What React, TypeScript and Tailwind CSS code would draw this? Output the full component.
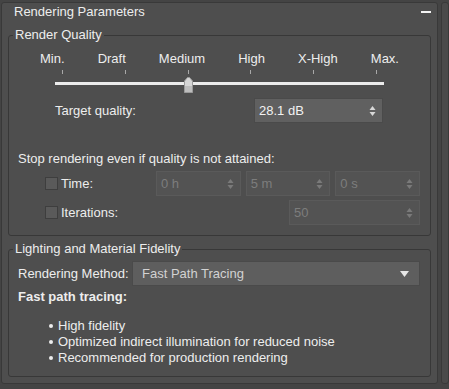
import React from "react";

const labels = ["Min.", "Draft", "Medium", "High", "X-High", "Max."];

function Arrows({ color }: { color: string }) {
  return (
    <svg width="7" height="12" viewBox="0 0 7 12">
      <path d="M0.5 5 L3.5 1 L6.5 5 Z" fill={color} />
      <path d="M0.5 7 L3.5 11 L6.5 7 Z" fill={color} />
    </svg>
  );
}

function Spin({
  value,
  disabled,
  className = "",
}: {
  value: string;
  disabled?: boolean;
  className?: string;
}) {
  return (
    <div
      className={`flex h-[25px] items-center justify-between border pl-[4px] pr-[6px] ${
        disabled
          ? "border-[#5a5a5a] bg-[#535353] text-[#7d7d7d]"
          : "border-[#4a4a4a] bg-[#606060] text-[#f2f2f2]"
      } ${className}`}
    >
      <span>{value}</span>
      <Arrows color={disabled ? "#7a7a7a" : "#d8d8d8"} />
    </div>
  );
}

function Check() {
  return (
    <span className="ml-[27px] block h-[13px] w-[13px] shrink-0 border border-[#3e3e3e] bg-[#5a5a5a]" />
  );
}

export default function App() {
  return (
    <div className="flex h-[389px] w-[449px] gap-[3px] overflow-hidden bg-[#444444] pl-[1px] pt-[2px] font-['Liberation_Sans',Arial,sans-serif] text-[13px] leading-[16px] text-[#ededed]">
      <div className="flex h-[382px] w-[437px] flex-col rounded-[3px] border border-[#393939] bg-[#4e4e4e]">
        {/* rollout header */}
        <div className="flex h-[18px] items-center justify-between pl-[12px] pr-[6px]">
          <span>Rendering Parameters</span>
          <span className="h-[2px] w-[10px] bg-[#f4f4f4]" />
        </div>

        {/* Render Quality */}
        <fieldset className="mx-[6px] mt-[6px] rounded-[3px] border border-[#383838]">
          <legend className="ml-[4px] px-[2px]">Render Quality</legend>

          <div className="px-[9px] pb-[10px]">
            <div className="mx-[22px] mt-[8px] flex justify-between">
              {labels.map((l) => (
                <span key={l}>{l}</span>
              ))}
            </div>

            <div className="relative mx-[37px] mt-[3px] h-[26px]">
              <div className="mx-[7px] flex justify-between">
                {labels.map((l) => (
                  <span key={l} className="block h-[4px] w-[1px] bg-[#a8a8a8]" />
                ))}
              </div>
              <div className="mt-[8px] h-[3px] w-full bg-[#ececec]" />
              <svg
                className="absolute left-[129px] top-[7px]"
                width="9"
                height="16"
                viewBox="0 0 9 16"
              >
                <path
                  d="M0.5 4 L3.5 0.5 L5.5 0.5 L8.5 4 L8.5 15.5 L0.5 15.5 Z"
                  fill="#d6d6d6"
                  stroke="#9a9a9a"
                  strokeWidth="1"
                />
                <path d="M1 9 L8 9 L8 15 L1 15 Z" fill="#bdbdbd" />
              </svg>
            </div>

            <div className="ml-[37px] mr-[38px] mt-[2px] flex items-center justify-between">
              <span>Target quality:</span>
              <Spin value="28.1 dB" className="w-[129px]" />
            </div>

            <div className="mt-[28px]">Stop rendering even if quality is not attained:</div>

            <div className="mt-[4px] flex items-center pr-[1px]">
              <Check />
              <span className="ml-[3px] w-[95px]">Time:</span>
              <div className="flex flex-1 gap-[5px]">
                <Spin value="0 h" disabled className="flex-1" />
                <Spin value="5 m" disabled className="flex-1" />
                <Spin value="0 s" disabled className="flex-1" />
              </div>
            </div>

            <div className="mt-[4px] flex items-center pr-[1px]">
              <Check />
              <span className="ml-[3px]">Iterations:</span>
              <Spin value="50" disabled className="ml-auto w-[131px]" />
            </div>
          </div>
        </fieldset>

        {/* Lighting and Material Fidelity */}
        <fieldset className="mx-[6px] mt-[5px] rounded-[3px] border border-[#383838]">
          <legend className="ml-[4px] px-[2px]">Lighting and Material Fidelity</legend>

          <div className="px-[9px] pb-[10px]">
            <div className="mt-[4px] flex items-center">
              <span className="w-[114px]">Rendering Method:</span>
              <div className="mr-[1px] flex h-[25px] flex-1 items-center justify-between border border-[#4a4a4a] bg-[#5e5e5e] pl-[9px] pr-[10px] text-[#d2d2d2]">
                <span>Fast Path Tracing</span>
                <svg width="9" height="6" viewBox="0 0 9 6">
                  <path d="M0 0 L9 0 L4.5 6 Z" fill="#e6e6e6" />
                </svg>
              </div>
            </div>

            <div className="mt-[3px] font-bold">Fast path tracing:</div>

            <ul className="ml-[31px] mt-[13px]">
              {[
                "High fidelity",
                "Optimized indirect illumination for reduced noise",
                "Recommended for production rendering",
              ].map((t) => (
                <li key={t} className="flex items-center gap-[5px]">
                  <span className="block h-[4px] w-[4px] rounded-full bg-[#ededed]" />
                  {t}
                </li>
              ))}
            </ul>
          </div>
        </fieldset>
      </div>

      {/* scrollbar */}
      <div className="h-[382px] w-[8px] rounded-[3px] border border-[#393939] bg-[#4a4a4a]" />
    </div>
  );
}
